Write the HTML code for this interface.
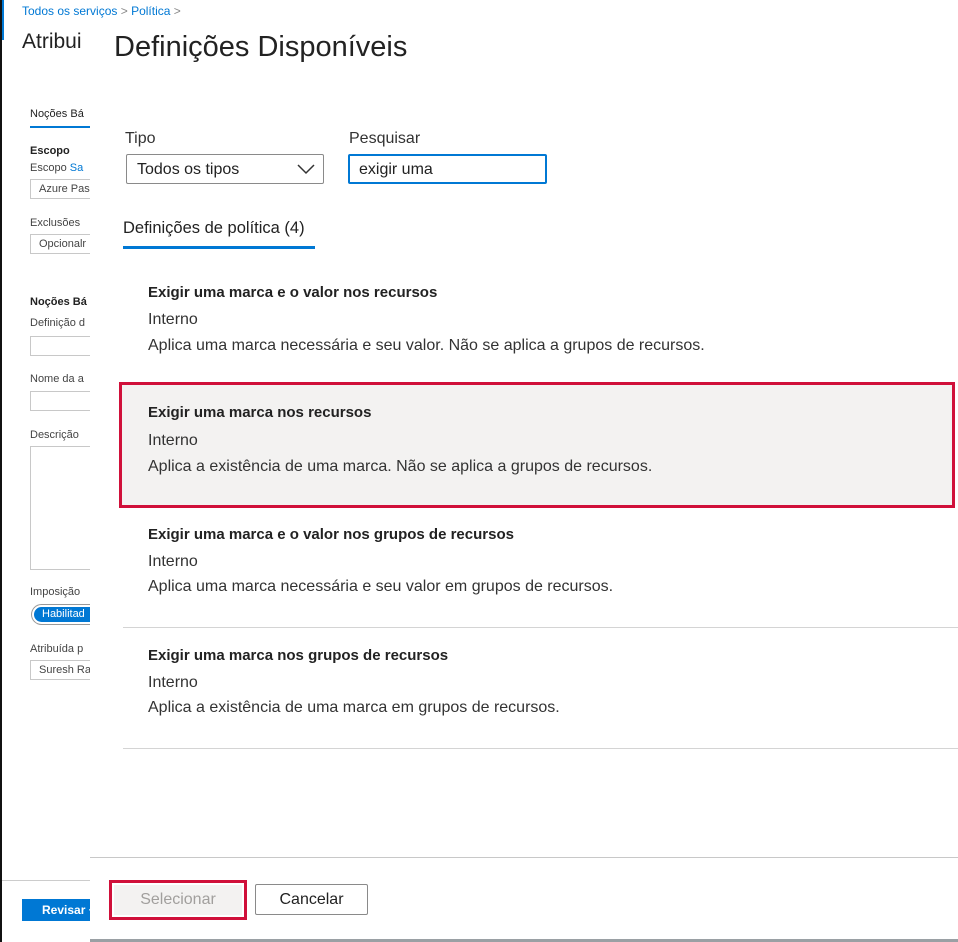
<!DOCTYPE html>
<html><head><meta charset="utf-8"><style>
*{margin:0;padding:0;box-sizing:border-box}
body{width:958px;height:942px;position:relative;background:#fff;font-family:"Liberation Sans","DejaVu Sans",sans-serif;color:#222;overflow:hidden}
.a{position:absolute;white-space:nowrap}
.s{font-size:11px;color:#444;white-space:nowrap}
.in{position:absolute;border:1px solid #c8c8c8;border-right:none;height:20px;left:30px;width:60px;overflow:hidden}
.t{font-size:15px;font-weight:bold;color:#222}
.n{font-size:16px;color:#333}
.hr{position:absolute;left:123px;right:0;height:1px;background:#d4d4d4}
</style></head><body>
<div class="a" style="left:0;top:0;width:2px;height:942px;background:#111"></div>
<div class="a" style="left:2px;top:0;width:2px;height:40px;background:#0078d4"></div>
<div class="a" style="left:22px;top:30px;font-size:21px;color:#222">Atribui</div>
<div class="a s" style="left:30px;top:108px;color:#222">Noções Bá</div>
<div class="a" style="left:30px;top:126px;width:60px;height:2px;background:#0078d4"></div>
<div class="a s" style="left:30px;top:145px;font-weight:bold;color:#222">Escopo</div>
<div class="a s" style="left:30px;top:162px">Escopo <span style="color:#0078d4">Sa</span></div>
<div class="in" style="top:179px"><span class="s" style="position:absolute;left:8px;top:3px">Azure Pas</span></div>
<div class="a s" style="left:30px;top:217px">Exclusões</div>
<div class="in" style="top:234px"><span class="s" style="position:absolute;left:8px;top:3px">Opcionalr</span></div>
<div class="a s" style="left:30px;top:296px;font-weight:bold;color:#222">Noções Bá</div>
<div class="a s" style="left:30px;top:317px">Definição d</div>
<div class="in" style="top:336px"></div>
<div class="a s" style="left:30px;top:373px">Nome da a</div>
<div class="in" style="top:391px"></div>
<div class="a s" style="left:30px;top:429px">Descrição</div>
<div class="in" style="top:446px;height:124px"></div>
<div class="a s" style="left:30px;top:586px">Imposição</div>
<div class="a" style="left:31px;top:604px;width:62px;height:21px;border:1px solid #999;border-right:none;border-radius:11px 0 0 11px;padding:2px"><div style="background:#0078d4;height:15px;border-radius:8px 0 0 8px;color:#fff;font-size:11px;padding-left:8px;line-height:15px">Habilitad</div></div>
<div class="a s" style="left:30px;top:643px">Atribuída p</div>
<div class="in" style="top:660px"><span class="s" style="position:absolute;left:8px;top:3px">Suresh Ra</span></div>
<div class="a" style="left:2px;top:880px;width:88px;height:1px;background:#ccc"></div>
<div class="a" style="left:22px;top:899px;width:68px;height:22px;background:#0078d4;color:#fff;font-size:12px;font-weight:bold;padding:4px 0 0 20px;overflow:hidden">Revisar +</div>

<div class="a" style="left:90px;top:24px;width:868px;height:918px;background:#fff"></div>
<div class="a s" style="left:22px;top:4px;color:#0078d4;font-size:12px">Todos os serviços <span style="color:#888">&gt;</span> Política <span style="color:#888">&gt;</span></div>
<div class="a" style="left:114px;top:31px;font-size:29px;color:#222">Definições Disponíveis</div>
<div class="a n" style="left:125px;top:130px">Tipo</div>
<div class="a" style="left:126px;top:154px;width:198px;height:30px;border:1px solid #8a8a8a;border-radius:2px"><span class="n" style="position:absolute;left:10px;top:6px;color:#222">Todos os tipos</span>
<svg style="position:absolute;right:8px;top:8px" width="18" height="12"><path d="M1 2 L9 10 L17 2" fill="none" stroke="#333" stroke-width="1.5"/></svg></div>
<div class="a n" style="left:349px;top:130px">Pesquisar</div>
<div class="a" style="left:348px;top:154px;width:199px;height:30px;border:2px solid #0078d4;border-radius:2px"><span class="n" style="position:absolute;left:9px;top:5px;color:#222">exigir uma</span></div>
<div class="a" style="left:123px;top:219px;color:#222;font-size:16.5px">Definições de política (4)</div>
<div class="a" style="left:123px;top:246px;width:192px;height:3px;background:#0078d4"></div>

<div class="a t" style="left:148px;top:284px">Exigir uma marca e o valor nos recursos</div>
<div class="a n" style="left:148px;top:311px">Interno</div>
<div class="a n" style="left:148px;top:337px">Aplica uma marca necessária e seu valor. Não se aplica a grupos de recursos.</div>

<div class="a" style="left:119px;top:382px;width:836px;height:126px;background:#f3f2f1;border:3px solid #d0103a"></div>
<div class="a t" style="left:148px;top:404px">Exigir uma marca nos recursos</div>
<div class="a n" style="left:148px;top:432px">Interno</div>
<div class="a n" style="left:148px;top:458px">Aplica a existência de uma marca. Não se aplica a grupos de recursos.</div>

<div class="a t" style="left:148px;top:526px">Exigir uma marca e o valor nos grupos de recursos</div>
<div class="a n" style="left:148px;top:553px">Interno</div>
<div class="a n" style="left:148px;top:578px">Aplica uma marca necessária e seu valor em grupos de recursos.</div>
<div class="hr" style="top:627px"></div>

<div class="a t" style="left:148px;top:647px">Exigir uma marca nos grupos de recursos</div>
<div class="a n" style="left:148px;top:674px">Interno</div>
<div class="a n" style="left:148px;top:699px">Aplica a existência de uma marca em grupos de recursos.</div>
<div class="hr" style="top:748px"></div>

<div class="a" style="left:90px;top:857px;right:0;height:1px;background:#c8c8c8"></div>
<div class="a" style="left:109px;top:880px;width:138px;height:40px;border:3px solid #d0103a;padding:2px"><div style="background:#f3f2f1;height:30px;color:#a19f9d;font-size:16px;text-align:center;line-height:30px">Selecionar</div></div>
<div class="a" style="left:255px;top:884px;width:113px;height:31px;border:1px solid #8a8a8a;border-radius:2px;font-size:16px;text-align:center;line-height:29px;color:#222">Cancelar</div>
<div class="a" style="left:90px;top:939px;right:0;height:3px;background:#9aa0a4"></div>
</body></html>
